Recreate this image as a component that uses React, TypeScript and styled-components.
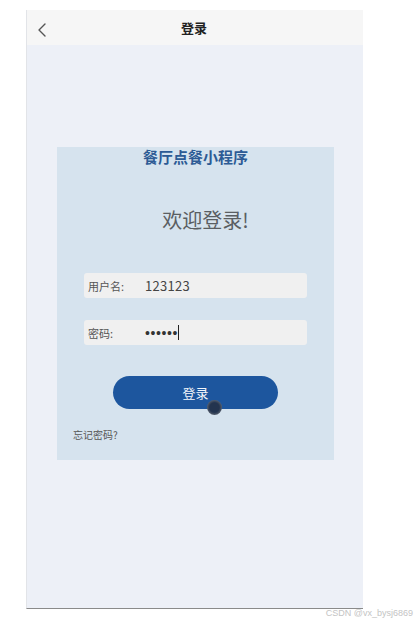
import React from 'react';
import styled, { createGlobalStyle } from 'styled-components';

const GlobalStyle = createGlobalStyle`
  body {
    margin: 0;
    background: #ffffff;
    font-family: "Noto Sans CJK SC", "Noto Sans", sans-serif;
  }
`;

const Page = styled.div`
  position: relative;
  width: 416px;
  height: 623px;
  padding: 10px 0 0 26px;
  box-sizing: border-box;
`;

const Phone = styled.div`
  width: 337px;
  height: 599px;
  display: flex;
  flex-direction: column;
  background: #edf0f7;
  border-left: 1px solid #e2e4e8;
  border-bottom: 1px solid #8a8a8a;
  box-sizing: border-box;
`;

const Header = styled.div`
  height: 35px;
  flex-shrink: 0;
  display: flex;
  align-items: center;
  justify-content: center;
  position: relative;
  background: #f6f6f6;
`;

const BackButton = styled.div`
  position: absolute;
  left: 9px;
  top: 9px;
  width: 14px;
  height: 16px;
  color: #555;
`;

const HeaderTitle = styled.span`
  font-size: 13px;
  font-weight: 700;
  color: #222;
  margin-right: 2px;
`;

const Body = styled.div`
  flex: 1;
  padding: 102px 0 0 30px;
`;

const Card = styled.div`
  width: 277px;
  height: 313px;
  background: #d6e3ee;
  display: flex;
  flex-direction: column;
  box-sizing: border-box;
  position: relative;
`;

const AppName = styled.div`
  text-align: center;
  font-size: 15px;
  line-height: 20px;
  font-weight: 700;
  color: #2d5b95;
`;

const Welcome = styled.div`
  margin-top: 39px;
  padding-left: 20px;
  text-align: center;
  font-size: 20px;
  line-height: 28px;
  color: #5a5e62;
`;

const Field = styled.div<{ gap: number }>`
  margin: ${({ gap }) => gap}px 0 0 27px;
  width: 223px;
  height: 25px;
  border-radius: 3px;
  background: #f0f0f0;
  display: flex;
  align-items: center;
  padding-left: 4px;
  box-sizing: border-box;
`;

const Label = styled.span`
  width: 57px;
  font-size: 11px;
  color: #555;
`;

const Value = styled.span`
  font-size: 13px;
  color: #444;
  letter-spacing: 0.3px;
`;

const Dots = styled.span`
  font-family: "Liberation Sans", Arial, sans-serif;
  font-size: 14px;
  color: #333;
  letter-spacing: 0.6px;
  display: flex;
  align-items: center;
`;

const Caret = styled.span`
  display: inline-block;
  width: 1px;
  height: 15px;
  background: #222;
`;

const LoginButton = styled.div`
  margin: 31px 0 0 56px;
  width: 165px;
  height: 33px;
  border-radius: 17px;
  background: #1d569e;
  color: #f4f7fb;
  font-size: 13px;
  display: flex;
  align-items: center;
  justify-content: center;
  position: relative;
`;

const Pointer = styled.div`
  position: absolute;
  left: 94px;
  top: 24px;
  width: 15px;
  height: 15px;
  border-radius: 50%;
  background: radial-gradient(circle, #23344f 45%, #5d6470 75%, rgba(120, 125, 135, 0.4) 100%);
`;

const Forgot = styled.div`
  margin: 18px 0 0 16px;
  font-size: 10px;
  line-height: 16px;
  color: #555;
`;

const Watermark = styled.div`
  position: absolute;
  right: 3px;
  bottom: 5px;
  font-family: "Liberation Sans", Arial, sans-serif;
  font-size: 9px;
  color: #c4c4c4;
`;

const App: React.FC = () => (
  <Page>
    <GlobalStyle />
    <Phone>
      <Header>
        <BackButton>
          <svg width="14" height="16" viewBox="0 0 14 16" fill="none">
            <path d="M9 2 L3 8 L9 14" stroke="#555" strokeWidth="1.4" strokeLinecap="round" strokeLinejoin="round" />
          </svg>
        </BackButton>
        <HeaderTitle>登录</HeaderTitle>
      </Header>
      <Body>
        <Card>
          <AppName>餐厅点餐小程序</AppName>
          <Welcome>欢迎登录!</Welcome>
          <Field gap={39}>
            <Label>用户名:</Label>
            <Value>123123</Value>
          </Field>
          <Field gap={22}>
            <Label>密码:</Label>
            <Dots>
              ••••••
              <Caret />
            </Dots>
          </Field>
          <LoginButton>
            登录
            <Pointer />
          </LoginButton>
          <Forgot>忘记密码?</Forgot>
        </Card>
      </Body>
    </Phone>
    <Watermark>CSDN @vx_bysj6869</Watermark>
  </Page>
);

export default App;
